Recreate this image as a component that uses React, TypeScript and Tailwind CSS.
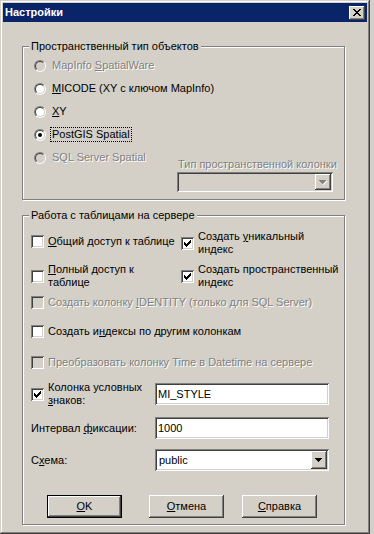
import React from 'react';

const raised =
  'shadow-[inset_-1px_-1px_0_#404040,inset_1px_1px_0_#fff,inset_-2px_-2px_0_#808080,inset_2px_2px_0_#d4d0c8]';
const sunken =
  'shadow-[inset_1px_1px_0_#808080,inset_-1px_-1px_0_#fff,inset_2px_2px_0_#404040,inset_-2px_-2px_0_#d4d0c8]';
const dis = 'text-[#808080] [text-shadow:1px_1px_0_#fff]';

const U = ({ children }: { children: React.ReactNode }) => <span className="underline underline-offset-[1px]">{children}</span>;

const Radio = ({ checked, disabled }: { checked?: boolean; disabled?: boolean }) => (
  <div className="w-[12px] h-[12px] shrink-0 rounded-full border border-t-[#808080] border-l-[#808080] border-r-white border-b-white">
    <div
      className={`w-full h-full rounded-full border border-t-[#404040] border-l-[#404040] border-r-[#d4d0c8] border-b-[#d4d0c8] flex items-center justify-center ${disabled ? 'bg-[#d4d0c8]' : 'bg-white'}`}
    >
      {checked && <div className="w-[4px] h-[4px] rounded-full bg-black" />}
    </div>
  </div>
);

const Check = ({ checked, disabled }: { checked?: boolean; disabled?: boolean }) => (
  <div className={`w-[13px] h-[13px] shrink-0 ${sunken} ${disabled ? 'bg-[#d4d0c8]' : 'bg-white'}`}>
    {checked && (
      <svg width="13" height="13" viewBox="0 0 13 13" shapeRendering="crispEdges">
        <path
          d="M3 5h1v3h-1zM4 6h1v3h-1zM5 7h1v3h-1zM6 6h1v3h-1zM7 5h1v3h-1zM8 4h1v3h-1zM9 3h1v3h-1z"
          fill="#000"
        />
      </svg>
    )}
  </div>
);

const Arrow = ({ disabled }: { disabled?: boolean }) => (
  <div className={`w-[16px] h-full bg-[#d4d0c8] ${raised} flex items-center justify-center`}>
    <svg width="8" height="5" viewBox="0 0 8 5" shapeRendering="crispEdges">
      {disabled && <path d="M1 1h7v1h-1v1h-1v1h-1v1h-1v-1h1v-1h1v-1h1v-1z" fill="#fff" />}
      <path d="M0 0h7v1h-1v1h-1v1h-1v1h-1v-1h-1v-1h-1v-1h-1z" fill={disabled ? '#808080' : '#000'} />
    </svg>
  </div>
);

const Group = ({ label, className, children }: { label: string; className: string; children: React.ReactNode }) => (
  <div className={`relative ml-[19px] w-[323px] border border-[#808080] shadow-[inset_1px_1px_0_#fff,1px_1px_0_#fff] ${className}`}>
    <div className="absolute -top-[7px] left-[6px] px-[2px] bg-[#d4d0c8] leading-[13px]">{label}</div>
    {children}
  </div>
);

const Btn = ({ children, def }: { children: React.ReactNode; def?: boolean }) => (
  <div className={`w-[75px] h-[23px] ${def ? 'border border-black' : ''}`}>
    <div className={`w-full h-full bg-[#d4d0c8] ${raised} flex items-center justify-center`}>{children}</div>
  </div>
);

export default function App() {
  const radios = [
    { label: <>MapInfo <U>S</U>patialWare</>, disabled: true },
    { label: <><U>M</U>ICODE (XY с ключом MapInfo)</> },
    { label: <><U>X</U>Y</> },
    { label: <>PostGIS Spatial</>, checked: true, focus: true },
  ];
  return (
    <div className="w-[374px] h-[534px] bg-[#d4d0c8] overflow-hidden whitespace-nowrap font-['Liberation_Sans',Arial,sans-serif] text-[11px] leading-[13px] text-black">
      <div className="w-[370px] h-[534px] p-[3px] shadow-[inset_-1px_-1px_0_#404040,inset_1px_1px_0_#d4d0c8,inset_-2px_-2px_0_#808080,inset_2px_2px_0_#fff]">
        <div className="h-[19px] bg-[#0a246a] flex items-center justify-between pl-[2px] pr-[2px]">
          <span className="text-white font-bold">Настройки</span>
          <div className={`w-[16px] h-[14px] bg-[#d4d0c8] ${raised} flex items-center justify-center`}>
            <svg width="8" height="7" viewBox="0 0 8 7" shapeRendering="crispEdges">
              <path
                d="M0 0h2v1h-2zM6 0h2v1h-2zM1 1h2v1h-2zM5 1h2v1h-2zM2 2h4v1h-4zM3 3h2v1h-2zM2 4h4v1h-4zM1 5h2v1h-2zM5 5h2v1h-2zM0 6h2v1h-2zM6 6h2v1h-2z"
                fill="#000"
              />
            </svg>
          </div>
        </div>

        <Group label="Пространственный тип объектов" className="mt-[24px] h-[154px]">
          <div className="pt-[7px] pl-[11px] pr-[11px] flex flex-col">
            {radios.map((r, i) => (
              <div key={i} className="h-[23px] flex items-center">
                <Radio checked={r.checked} disabled={r.disabled} />
                <span
                  className={`ml-[4px] px-[1px] border ${r.focus ? 'border-dotted border-black' : 'border-transparent'} ${r.disabled ? dis : ''}`}
                >
                  {r.label}
                </span>
              </div>
            ))}
            <div className="flex items-start">
              <div className="h-[23px] flex items-center">
                <Radio disabled />
                <span className={`ml-[4px] px-[1px] border border-transparent ${dis}`}>SQL Server Spatial</span>
              </div>
              <div className="ml-auto mt-[12px] w-[156px] flex flex-col">
                <span className={`pl-[1px] ${dis}`}>Тип пространственной колонки</span>
                <div className={`mt-[1px] h-[20px] bg-[#d4d0c8] ${sunken} p-[2px] flex justify-end`}>
                  <Arrow disabled />
                </div>
              </div>
            </div>
          </div>
        </Group>

        <Group label="Работа с таблицами на сервере" className="mt-[15px] h-[310px]">
          <div className="pt-[14px] pl-[8px] pr-[14px] flex flex-col">
            <div className="flex items-start">
              <div className="w-[150px] shrink-0 h-[22px] flex items-center gap-[4px]">
                <Check />
                <span><U>О</U>бщий доступ к таблице</span>
              </div>
              <div className="h-[26px] flex items-center gap-[4px]">
                <Check checked />
                <span>Создать <U>у</U>никальный<br />индекс</span>
              </div>
            </div>
            <div className="mt-[7px] flex items-start">
              <div className="w-[150px] shrink-0 h-[26px] flex items-center gap-[4px]">
                <Check />
                <span><U>П</U>олный доступ к<br />таблице</span>
              </div>
              <div className="h-[26px] flex items-center gap-[4px]">
                <Check checked />
                <span>Создать пространственный<br />ин<U>д</U>екс</span>
              </div>
            </div>
            <div className="mt-[3px] h-[20px] flex items-center gap-[4px]">
              <Check disabled />
              <span className={dis}>Создать колонку <U>I</U>DENTITY (только для SQL Server)</span>
            </div>
            <div className="mt-[9px] h-[20px] flex items-center gap-[4px]">
              <Check />
              <span>Создать и<U>н</U>дексы по другим колонкам</span>
            </div>
            <div className="mt-[11px] h-[20px] flex items-center gap-[4px]">
              <Check disabled />
              <span className={dis}>Преобразовать колонку Time в Datetime на сервере</span>
            </div>
            <div className="mt-[9px] h-[26px] flex items-center">
              <div className="w-[124px] shrink-0 flex items-center gap-[4px]">
                <Check checked />
                <span>Колонка условных<br /><U>з</U>наков:</span>
              </div>
              <div className={`w-[174px] h-[22px] bg-white ${sunken} flex items-center pl-[3px]`}>MI_STYLE</div>
            </div>
            <div className="mt-[10px] h-[22px] flex items-center">
              <span className="w-[124px] shrink-0">Интервал <U>ф</U>иксации:</span>
              <div className={`w-[174px] h-[22px] bg-white ${sunken} flex items-center pl-[3px]`}>1000</div>
            </div>
            <div className="mt-[10px] h-[22px] flex items-center">
              <span className="w-[124px] shrink-0">С<U>х</U>ема:</span>
              <div className={`w-[174px] h-[22px] bg-white ${sunken} flex items-stretch p-[2px]`}>
                <span className="flex-1 flex items-center pl-[2px]">public</span>
                <Arrow />
              </div>
            </div>
            <div className="mt-[24px] pl-[16px] flex items-center">
              <Btn def><U>O</U>K</Btn>
              <div className="ml-[27px]">
                <Btn><U>О</U>тмена</Btn>
              </div>
              <div className="ml-[18px]">
                <Btn><U>С</U>правка</Btn>
              </div>
            </div>
          </div>
        </Group>
      </div>
    </div>
  );
}
